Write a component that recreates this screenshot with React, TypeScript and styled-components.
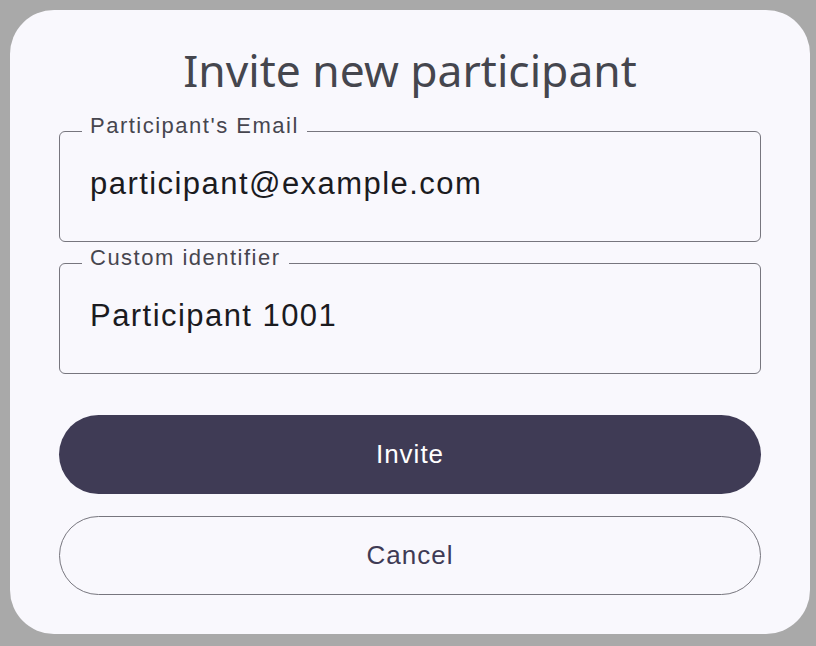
import styled, { createGlobalStyle } from 'styled-components';

const GlobalStyle = createGlobalStyle`
  html, body {
    margin: 0;
    padding: 0;
    background: #a9a9a9;
  }
  body {
    font-family: "Liberation Sans", Arial, sans-serif;
  }
`;

const Page = styled.div`
  width: 816px;
  height: 646px;
  padding: 10px 6px 12px 10px;
  box-sizing: border-box;
`;

const Dialog = styled.div`
  width: 800px;
  height: 624px;
  box-sizing: border-box;
  background: #f9f8fd;
  border-radius: 44px;
  padding: 30px 49px 0;
  display: flex;
  flex-direction: column;
`;

const Title = styled.h1`
  margin: 0 0 16px;
  text-align: center;
  font-family: "Noto Sans", "Open Sans", sans-serif;
  font-weight: 400;
  font-size: 44.4px;
  line-height: 60px;
  color: #45464e;
`;

const Fields = styled.div`
  display: flex;
  flex-direction: column;
  gap: 6px;
`;

const Field = styled.fieldset`
  margin: 0;
  padding: 18px 30px 0;
  height: 126px;
  box-sizing: border-box;
  border: 1.75px solid #77767e;
  border-radius: 6px;
  min-width: 0;
`;

const Legend = styled.legend`
  padding: 0 8px 10px;
  margin-left: -8px;
  font-size: 22px;
  line-height: 20px;
  letter-spacing: 1.5px;
  color: #47464f;
`;

const Input = styled.input`
  display: block;
  border: none;
  outline: none;
  background: transparent;
  width: 100%;
  height: 40px;
  padding: 0;
  margin: 0;
  font-family: "Liberation Sans", Arial, sans-serif;
  font-size: 31px;
  line-height: 40px;
  letter-spacing: 1.45px;
  color: #1b1b1f;
`;

const Actions = styled.div`
  margin-top: 41px;
  display: flex;
  flex-direction: column;
  gap: 22px;
`;

const Button = styled.button<{ $filled?: boolean }>`
  width: 100%;
  height: 79px;
  box-sizing: border-box;
  border-radius: 40px;
  font-family: "Liberation Sans", Arial, sans-serif;
  font-size: 26px;
  letter-spacing: 1px;
  cursor: pointer;
  background: ${(p) => (p.$filled ? '#3f3b55' : 'transparent')};
  color: ${(p) => (p.$filled ? '#ffffff' : '#3f3b55')};
  border: ${(p) => (p.$filled ? 'none' : '1.75px solid #77767e')};
`;

export default function App() {
  return (
    <>
      <GlobalStyle />
      <Page>
        <Dialog>
          <Title>Invite new participant</Title>
          <Fields>
            <Field>
              <Legend>Participant's Email</Legend>
              <Input defaultValue="participant@example.com" />
            </Field>
            <Field>
              <Legend>Custom identifier</Legend>
              <Input defaultValue="Participant 1001" />
            </Field>
          </Fields>
          <Actions>
            <Button $filled>Invite</Button>
            <Button>Cancel</Button>
          </Actions>
        </Dialog>
      </Page>
    </>
  );
}
